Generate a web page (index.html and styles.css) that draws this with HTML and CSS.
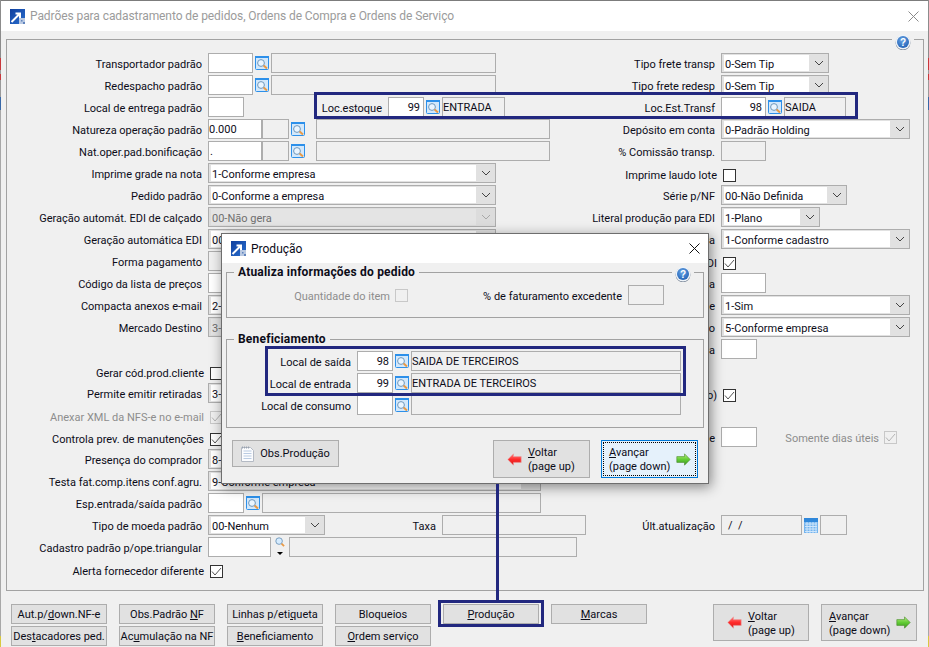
FILE: index.html
```html
<!DOCTYPE html>
<html lang="pt-BR">
<head>
<meta charset="utf-8">
<title>Padrões para cadastramento de pedidos</title>
<link rel="stylesheet" href="styles.css">
</head>
<body>
<svg class="defs" width="0" height="0" aria-hidden="true">
  <defs>
    <linearGradient id="g-app" x1="0" y1="0" x2="1" y2="1"><stop offset="0" stop-color="#0f3f9e"/><stop offset="1" stop-color="#2a6fcf"/></linearGradient>
    <linearGradient id="g-red" x1="0" y1="0" x2="0" y2="1"><stop offset="0" stop-color="#ff8080"/><stop offset=".5" stop-color="#ff2a2a"/><stop offset="1" stop-color="#d81818"/></linearGradient>
    <linearGradient id="g-green" x1="0" y1="0" x2="0" y2="1"><stop offset="0" stop-color="#b8f080"/><stop offset=".5" stop-color="#62cc35"/><stop offset="1" stop-color="#3c9a1e"/></linearGradient>
    <radialGradient id="g-help" cx=".45" cy=".35" r=".7"><stop offset="0" stop-color="#6aa6e6"/><stop offset="1" stop-color="#1f5fb4"/></radialGradient>
    <symbol id="i-app" viewBox="0 0 15 15">
      <rect width="15" height="15" fill="url(#g-app)"/>
      <path d="M9 15V9h6v6z" fill="#b9c9e2"/>
      <path d="M11 11h1.5v1.5H11zM13 13h2v2h-2z" fill="#5f83bd"/>
      <path d="M1.5 13 9 5.5M5.5 4.5H10V9" fill="none" stroke="#fff" stroke-width="2"/>
    </symbol>
    <symbol id="i-search" viewBox="0 0 14 14">
      <rect x=".5" y=".5" width="13" height="13" rx="1" fill="#d3e8fb" stroke="#2d90ea"/>
      <rect x="0" y="0" width="14" height="2" fill="#2d90ea"/>
      <circle cx="6" cy="7" r="3.4" fill="#eaf5ff" stroke="#6f97bb"/>
      <path d="M8.6 9.6 12 12.6" stroke="#e99a45" stroke-width="2"/>
    </symbol>
    <symbol id="i-lens" viewBox="0 0 11 11">
      <circle cx="4.5" cy="4.5" r="3.6" fill="#d6ecff" stroke="#6f97bb"/>
      <path d="M7.2 7.2 10 10" stroke="#e99a45" stroke-width="2"/>
    </symbol>
    <symbol id="i-chev" viewBox="0 0 10 6">
      <path d="M1 1 5 5 9 1" fill="none" stroke="currentColor"/>
    </symbol>
    <symbol id="i-check" viewBox="0 0 11 11">
      <path d="M1 5.500 4 9 10 2" fill="none" stroke="currentColor"/>
    </symbol>
    <symbol id="i-help" viewBox="0 0 16 16">
      <circle cx="8" cy="8.800" r="7.400" fill="#6e7c8e"/>
      <circle cx="8" cy="8" r="7.400" fill="#eef3f8"/>
      <circle cx="8" cy="8" r="6" fill="url(#g-help)"/>
      <text x="8" y="11.700" text-anchor="middle" class="help-q">?</text>
    </symbol>
    <symbol id="i-left" viewBox="0 0 15 13">
      <path d="M.8 6.500 6.500.8V3.600h7.700v5.800H6.500v2.800z" fill="url(#g-red)" stroke="#e8a0a0" stroke-width=".6"/>
    </symbol>
    <symbol id="i-right" viewBox="0 0 15 13">
      <path d="M14.200 6.500 8.500.8V3.600H.8v5.800h7.700v2.800z" fill="url(#g-green)" stroke="#4c8a30" stroke-width=".6"/>
    </symbol>
    <symbol id="i-page" viewBox="0 0 13 16">
      <path d="M.5 1.500h9l3 3v11H.5z" fill="#fbfcfe" stroke="#b4bac4"/>
      <path d="M2.500 5h8M2.500 7.500h8M2.500 10h8M2.500 12.500h8" stroke="#b9cbe2"/>
      <path d="M1.500.5v2M3.500.5v2M5.500.5v2M7.500.5v2" stroke="#9aa3b0"/>
    </symbol>
    <symbol id="i-cal" viewBox="0 0 14 15">
      <rect y="1" width="14" height="14" fill="#74b4ee"/>
      <rect y="0" width="14" height="4" fill="#2f87da"/>
      <path d="M1 6h12M1 8.500h12M1 11h12M1 13.500h12M3 4v11M6 4v11M9 4v11M12 4v11" stroke="#cfe6fb"/>
    </symbol>
  </defs>
</svg>

<div class="window">
  <header class="titlebar">
    <svg class="app-icon"><use href="#i-app"/></svg>
    <span class="title-text">Padrões para cadastramento de pedidos, Ordens de Compra e Ordens de Serviço</span>
    <svg class="close close--idle" viewBox="0 0 11 11"><path d="M.5.500 10.500 10.500M10.500.500.500 10.500"/></svg>
  </header>

  <main class="panel">
    <svg class="help help--main"><use href="#i-help"/></svg>

    <div class="row">
      <div class="left"><span class="lbl">Transportador padrão</span><span class="field w45"></span><svg class="ic"><use href="#i-search"/></svg><span class="field off w225"></span></div>
      <div class="right"><span class="lbl">Tipo frete transp</span><span class="sel w108"><span class="val">0-Sem Tip</span><span class="arrow"><svg><use href="#i-chev"/></svg></span></span></div>
    </div>
    <div class="row">
      <div class="left"><span class="lbl">Redespacho padrão</span><span class="field w45"></span><svg class="ic"><use href="#i-search"/></svg><span class="field off w225"></span></div>
      <div class="right"><span class="lbl">Tipo frete redesp</span><span class="sel w108"><span class="val">0-Sem Tip</span><span class="arrow"><svg><use href="#i-chev"/></svg></span></span></div>
    </div>
    <div class="row">
      <div class="left"><span class="lbl">Local de entrega padrão</span><span class="field w36"></span><span class="lbl lbl--loc">Loc.estoque</span><span class="field num w36">99</span><svg class="ic"><use href="#i-search"/></svg><span class="field off w63">ENTRADA</span></div>
      <div class="right"><span class="lbl">Loc.Est.Transf</span><span class="field num w45">98</span><svg class="ic"><use href="#i-search"/></svg><span class="field off w62">SAIDA</span></div>
    </div>
    <div class="row">
      <div class="left"><span class="lbl">Natureza operação padrão</span><span class="field w54 tight">0.000</span><span class="field off w27"></span><svg class="ic"><use href="#i-search"/></svg><span class="field off w234 ml9"></span></div>
      <div class="right"><span class="lbl">Depósito em conta</span><span class="sel w189"><span class="val">0-Padrão Holding</span><span class="arrow"><svg><use href="#i-chev"/></svg></span></span></div>
    </div>
    <div class="row">
      <div class="left"><span class="lbl">Nat.oper.pad.bonificação</span><span class="field w54">.</span><span class="field off w27"></span><svg class="ic"><use href="#i-search"/></svg><span class="field off w234 ml9"></span></div>
      <div class="right"><span class="lbl">% Comissão transp.</span><span class="field off w45"></span></div>
    </div>
    <div class="row">
      <div class="left"><span class="lbl">Imprime grade na nota</span><span class="sel w288"><span class="val">1-Conforme empresa</span><span class="arrow"><svg><use href="#i-chev"/></svg></span></span></div>
      <div class="right right--chk"><span class="lbl lbl--chk">Imprime laudo lote</span><span class="chk"></span></div>
    </div>
    <div class="row">
      <div class="left"><span class="lbl">Pedido padrão</span><span class="sel w288"><span class="val">0-Conforme a empresa</span><span class="arrow"><svg><use href="#i-chev"/></svg></span></span></div>
      <div class="right"><span class="lbl">Série p/NF</span><span class="sel w126"><span class="val">00-Não Definida</span><span class="arrow"><svg><use href="#i-chev"/></svg></span></span></div>
    </div>
    <div class="row">
      <div class="left"><span class="lbl">Geração automát. EDI de calçado</span><span class="sel sel--off w288"><span class="val">00-Não gera</span><span class="arrow"><svg><use href="#i-chev"/></svg></span></span></div>
      <div class="right"><span class="lbl">Literal produção para EDI</span><span class="sel w99"><span class="val">1-Plano</span><span class="arrow"><svg><use href="#i-chev"/></svg></span></span></div>
    </div>
    <div class="row">
      <div class="left"><span class="lbl">Geração automática EDI</span><span class="sel w288"><span class="val">00</span><span class="arrow"></span></span></div>
      <div class="right"><span class="lbl">a</span><span class="sel w189"><span class="val">1-Conforme cadastro</span><span class="arrow"><svg><use href="#i-chev"/></svg></span></span></div>
    </div>
    <div class="row">
      <div class="left"><span class="lbl">Forma pagamento</span><span class="field off w45"></span></div>
      <div class="right right--chk"><span class="lbl lbl--chk">DI</span><span class="chk on"><svg><use href="#i-check"/></svg></span></div>
    </div>
    <div class="row">
      <div class="left"><span class="lbl">Código da lista de preços</span><span class="field w45"></span></div>
      <div class="right"><span class="lbl">a</span><span class="field w45"></span></div>
    </div>
    <div class="row">
      <div class="left"><span class="lbl">Compacta anexos e-mail</span><span class="sel w288"><span class="val">2-</span><span class="arrow"></span></span></div>
      <div class="right"><span class="lbl">e</span><span class="sel w189"><span class="val">1-Sim</span><span class="arrow"><svg><use href="#i-chev"/></svg></span></span></div>
    </div>
    <div class="row">
      <div class="left"><span class="lbl">Mercado Destino</span><span class="sel sel--off w288"><span class="val">3-</span><span class="arrow"></span></span></div>
      <div class="right"><span class="lbl">o</span><span class="sel w189"><span class="val">5-Conforme empresa</span><span class="arrow"><svg><use href="#i-chev"/></svg></span></span></div>
    </div>
    <div class="row">
      <div class="left"></div>
      <div class="right"><span class="lbl">a</span><span class="field w36"></span></div>
    </div>
    <div class="row">
      <div class="left left--chk"><span class="lbl lbl--chk">Gerar cód.prod.cliente</span><span class="chk"></span></div>
      <div class="right"></div>
    </div>
    <div class="row">
      <div class="left"><span class="lbl">Permite emitir retiradas</span><span class="sel w288"><span class="val">3-</span><span class="arrow"></span></span></div>
      <div class="right right--chk"><span class="lbl lbl--chk">o)</span><span class="chk on"><svg><use href="#i-check"/></svg></span></div>
    </div>
    <div class="row">
      <div class="left left--chk"><span class="lbl lbl--chk off">Anexar XML da NFS-e no e-mail</span><span class="chk chk--off on"><svg><use href="#i-check"/></svg></span></div>
      <div class="right"></div>
    </div>
    <div class="row">
      <div class="left left--chk"><span class="lbl lbl--chk">Controla prev. de manutenções</span><span class="chk on"><svg><use href="#i-check"/></svg></span></div>
      <div class="right"><span class="lbl">e</span><span class="field w36"></span><span class="lbl lbl--dias off">Somente dias úteis</span><span class="chk chk--off on"><svg><use href="#i-check"/></svg></span></div>
    </div>
    <div class="row">
      <div class="left"><span class="lbl">Presença do comprador</span><span class="sel w288"><span class="val">8-</span><span class="arrow"></span></span></div>
      <div class="right"></div>
    </div>
    <div class="row">
      <div class="left"><span class="lbl">Testa fat.comp.itens conf.agru.</span><span class="sel w333"><span class="val">9-Conforme empresa</span><span class="arrow"><svg><use href="#i-chev"/></svg></span></span></div>
      <div class="right"></div>
    </div>
    <div class="row">
      <div class="left"><span class="lbl">Esp.entrada/saída padrão</span><span class="field w36"></span><svg class="ic"><use href="#i-search"/></svg><span class="field off w279"></span></div>
      <div class="right"></div>
    </div>
    <div class="row">
      <div class="left"><span class="lbl">Tipo de moeda padrão</span><span class="sel w117"><span class="val">00-Nenhum</span><span class="arrow"><svg><use href="#i-chev"/></svg></span></span><span class="lbl lbl--taxa">Taxa</span><span class="field off w144"></span></div>
      <div class="right"><span class="lbl">Últ.atualização</span><span class="field off w81 date">/&nbsp;&nbsp;/</span><svg class="ic ic--cal"><use href="#i-cal"/></svg><span class="field off w27"></span></div>
    </div>
    <div class="row">
      <div class="left"><span class="lbl">Cadastro padrão p/ope.triangular</span><span class="field w63"></span><span class="picker"><svg class="lens"><use href="#i-lens"/></svg><span class="drop"></span></span><span class="field off w288"></span></div>
      <div class="right"></div>
    </div>
    <div class="row">
      <div class="left left--chk"><span class="lbl lbl--chk">Alerta fornecedor diferente</span><span class="chk on"><svg><use href="#i-check"/></svg></span></div>
      <div class="right"></div>
    </div>
  </main>

  <footer class="actions">
    <div class="btn-grid">
      <button class="btn">Aut.p/<u>d</u>own.NF-e</button>
      <button class="btn">Obs.Padrão <u>N</u>F</button>
      <button class="btn">Linhas p/eti<u>q</u>ueta</button>
      <button class="btn">Bloqueios</button>
      <button class="btn"><u>P</u>rodução</button>
      <button class="btn"><u>M</u>arcas</button>
      <button class="btn">Des<u>t</u>acadores ped.</button>
      <button class="btn">Ac<u>u</u>mulação na NF</button>
      <button class="btn"><u>B</u>eneficiamento</button>
      <button class="btn"><u>O</u>rdem serviço</button>
    </div>
    <div class="nav">
      <button class="btn btn--nav"><svg class="arrow-ic"><use href="#i-left"/></svg><span class="two"><u>V</u>oltar<br>(page up)</span></button>
      <button class="btn btn--nav"><span class="two"><u>A</u>vançar<br>(page down)</span><svg class="arrow-ic"><use href="#i-right"/></svg></button>
    </div>
  </footer>
</div>

<section class="dlg">
  <header class="dlg-title">
    <svg class="app-icon"><use href="#i-app"/></svg>
    <span>Produção</span>
    <svg class="close" viewBox="0 0 11 11"><path d="M.5.500 10.500 10.500M10.500.500.500 10.500"/></svg>
  </header>
  <fieldset class="group group--a">
    <legend>Atualiza informações do pedido</legend>
    <svg class="help help--dlg"><use href="#i-help"/></svg>
    <div class="row">
      <span class="dlbl dlbl--qty off">Quantidade do item</span><span class="chk chk--off"></span>
      <span class="dlbl dlbl--fat">% de faturamento excedente</span><span class="field off w36"></span>
    </div>
  </fieldset>
  <fieldset class="group group--b">
    <legend>Beneficiamento</legend>
    <div class="row"><span class="dlbl">Local de saída</span><span class="field num w36">98</span><svg class="ic"><use href="#i-search"/></svg><span class="field off w270">SAIDA DE TERCEIROS</span></div>
    <div class="row"><span class="dlbl">Local de entrada</span><span class="field num w36">99</span><svg class="ic"><use href="#i-search"/></svg><span class="field off w270">ENTRADA DE TERCEIROS</span></div>
    <div class="row"><span class="dlbl">Local de consumo</span><span class="field w36"></span><svg class="ic"><use href="#i-search"/></svg><span class="field off w270"></span></div>
  </fieldset>
  <div class="dlg-actions">
    <button class="btn btn--obs"><svg class="page"><use href="#i-page"/></svg>Obs.Produção</button>
    <button class="btn btn--nav btn--dlg push"><svg class="arrow-ic"><use href="#i-left"/></svg><span class="two"><u>V</u>oltar<br>(page up)</span></button>
    <button class="btn btn--nav btn--dlg focus"><span class="two"><u>A</u>vançar<br>(page down)</span><svg class="arrow-ic"><use href="#i-right"/></svg></button>
  </div>
</section>

<div class="mark mark--loc"></div>
<div class="mark mark--dlg"></div>
<div class="mark mark--btn"></div>
<div class="mark-line"></div>
</body>
</html>
```
FILE: styles.css
```css
* { box-sizing: border-box; }
html, body { margin: 0; padding: 0; height: 647px; overflow: hidden; }
body {
  position: relative;
  width: 929px;
  font: 11px/14px Roboto, "Noto Sans", sans-serif;
  color: #0c0c18;
  background: linear-gradient(to bottom,
    #8c8c8c 0 58px, #c8383c 58px 70px, #9a9a9a 70px 74px, #c8383c 74px 80px, #9a9a9a 80px 97px,
    #3868a8 97px 110px, #a8a8a8 110px 636px, #d8c840 636px 647px);
}
.defs { position: absolute; }
.help-q { font: bold 10px "Liberation Sans", sans-serif; fill: #fff; }

.window {
  position: relative;
  margin-left: 1px;
  width: 927px;
  height: 647px;
  background: #f0f0f0;
  border-top: 1px solid #7c7c7c;
}
.titlebar {
  display: flex;
  align-items: center;
  height: 30px;
  padding: 0 9px;
  background: #fff;
}
.app-icon { width: 15px; height: 15px; flex: none; }
.title-text { margin-left: 5px; font-size: 12px; color: #9b9b9b; letter-spacing: -.08px; }
.close { width: 11px; height: 11px; margin-left: auto; flex: none; stroke: #111; fill: none; }
.close--idle { stroke: #8a8a8a; }

.panel {
  position: relative;
  margin: 8px 4px 0 5px;
  height: 552px;
  padding-top: 12px;
  border: 1px solid #a2a2a2;
}
.help { position: absolute; width: 22px; height: 16px; padding: 0 3px; background: #f0f0f0; }
.help--main { right: 9px; top: -6px; }

.row { display: flex; align-items: center; height: 22px; white-space: nowrap; }
.left { display: flex; align-items: center; width: 553px; flex: none; height: 22px; }
.right { display: flex; align-items: center; flex: 1; height: 22px; }
.left--chk, .right--chk { padding-top: 4px; }

.lbl { width: 195px; margin-right: 6px; padding-top: 4px; text-align: right; flex: none; }
.lbl--chk { width: 197px; padding-top: 2px; }
.right .lbl { width: 155px; }
.right .lbl--chk { width: 157px; }
.lbl--loc { width: 138px; }
.lbl--taxa { width: 111px; }
.right .lbl--dias { width: 122px; margin-right: 5px; }
.off { color: #8d8d8d; }

.field {
  display: block;
  flex: none;
  height: 20px;
  line-height: 20px;
  padding: 0 1px;
  border: 1px solid #adadad;
  background: #fff;
  overflow: hidden;
}
.field.off { background: #f0f0f0; color: #0c0c18; padding-left: 0; }
.num { text-align: right; padding-right: 3px; }
.tight { padding-left: 0; }
.field.date { padding-left: 6px; }
.w27 { width: 27px; } .w36 { width: 36px; } .w45 { width: 45px; } .w54 { width: 54px; }
.w62 { width: 62px; } .w63 { width: 63px; } .w81 { width: 81px; } .w99 { width: 99px; }
.w108 { width: 108px; } .w117 { width: 117px; } .w126 { width: 126px; } .w144 { width: 144px; }
.w189 { width: 189px; } .w225 { width: 225px; } .w234 { width: 234px; } .w270 { width: 270px; }
.w279 { width: 279px; } .w288 { width: 288px; } .w333 { width: 333px; }
.ml9 { margin-left: 9px; }

.ic { width: 14px; height: 14px; margin: 0 2px; flex: none; }
.ic--cal { height: 15px; }

.sel {
  display: flex;
  flex: none;
  height: 20px;
  border: 1px solid #adadad;
  background: #e1e1e1;
  padding: 1px 0 1px 2px;
}
.val { flex: 1; background: #fff; line-height: 16px; padding: 2px 0 0 1px; overflow: hidden; }
.arrow { width: 19px; flex: none; display: flex; align-items: center; justify-content: center; color: #444; }
.arrow svg { width: 10px; height: 6px; }
.sel--off { background: #dcdcdc; }
.sel--off .val { background: #e4e4e4; color: #6f6f6f; }
.sel--off .arrow { color: #a8a8a8; }

.chk {
  display: flex;
  width: 13px;
  height: 13px;
  flex: none;
  align-items: center;
  justify-content: center;
  border: 1px solid #333;
  background: #fff;
  color: #555;
}
.chk svg { width: 11px; height: 11px; }
.chk--off { border-color: #c8c8c8; background: #f0f0f0; color: #b4b4b4; }

.picker { width: 18px; height: 22px; flex: none; display: flex; flex-direction: column; align-items: center; }
.lens { width: 10px; height: 10px; margin-top: 1px; }
.drop { margin-top: 5px; border: 3px solid transparent; border-top: 3px solid #000; border-bottom: 0; width: 0; height: 0; }

.actions { display: flex; margin-top: 13px; padding: 0 10px; }
.btn-grid { display: grid; grid-template-columns: repeat(6, 96px); grid-auto-rows: 20px; column-gap: 12px; row-gap: 2px; }
.nav { display: flex; gap: 12px; margin-left: auto; padding-right: 1px; }
.btn {
  font: inherit;
  color: inherit;
  border: 1px solid #adadad;
  background: #e1e1e1;
  padding: 2px 0 0;
  white-space: nowrap;
}
.btn--nav { display: flex; align-items: center; width: 96px; height: 37px; padding: 0 9px 0 7px; text-align: left; gap: 6px; }
.btn--nav .two { flex: 1; padding-top: 2px; }
.nav .btn--nav:first-child { padding-left: 13px; }
.arrow-ic { width: 15px; height: 13px; flex: none; }

/* dialog window lying over the form */
.dlg {
  position: absolute;
  left: 221px;
  top: 233px;
  width: 488px;
  height: 251px;
  border: 1px solid #6e6e6e;
  background: #f0f0f0;
  box-shadow: 2px 3px 12px rgba(0, 0, 0, .45);
}
.dlg-title {
  display: flex;
  align-items: center;
  gap: 5px;
  height: 29px;
  padding: 0 8px 0 9px;
  background: #fff;
  font-size: 12px;
}
.group { position: relative; margin: 2px 4px 0; padding: 0; border: 1px solid #a2a2a2; }
.group legend { margin-left: 7px; padding: 0 4px; font-size: 12px; font-weight: 700; line-height: 14px; letter-spacing: .2px; }
.group--a { height: 53px; padding-top: 5px; }
.group--b { height: 96px; margin-top: 14px; padding-top: 4px; }
.help--dlg { right: 9px; top: -13px; }
.dlbl { width: 124px; margin-right: 6px; padding-top: 4px; text-align: right; flex: none; }
.dlbl--qty { width: 163px; margin-right: 5px; }
.dlbl--fat { width: 214px; margin-right: 6px; }
.dlg-actions { display: flex; align-items: flex-start; margin-top: 12px; padding: 0 10px; gap: 11px; }
.btn--obs { display: flex; align-items: center; justify-content: center; gap: 6px; width: 107px; height: 27px; padding-top: 0; }
.page { width: 13px; height: 16px; }
.btn--dlg { height: 38px; width: 97px; }
.push { margin-left: auto; padding-left: 13px; }
.focus {
  border-color: #0078d7;
  background: #e5f1fb;
  outline: 1px dotted #000;
  outline-offset: -3px;
}

/* annotation strokes drawn on top of the screenshot */
.mark { position: absolute; border: 3px solid #22287f; }
.mark--loc { left: 314px; top: 92px; width: 544px; height: 27px; }
.mark--dlg { left: 265px; top: 346px; width: 421px; height: 50px; }
.mark--btn { left: 438px; top: 600px; width: 106px; height: 27px; }
.mark-line { position: absolute; left: 496px; top: 484px; width: 3px; height: 116px; background: #22287f; }
```
